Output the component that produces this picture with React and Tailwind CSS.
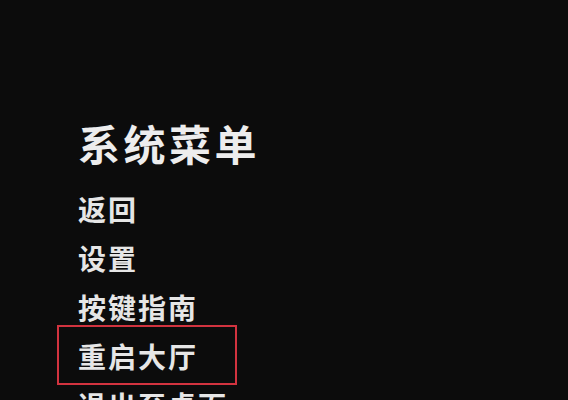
export default function App() {
  const items = ["返回", "设置", "按键指南", "重启大厅", "退出至桌面"];
  return (
    <div
      className="w-[568px] h-[400px] overflow-hidden bg-[#0c0c0c] text-[#e6e6e6] pl-[78px] pt-[122px]"
      style={{ fontFamily: '"Noto Sans CJK SC", "Noto Sans", sans-serif' }}
    >
      <div className="text-[42px] leading-[42px] font-bold tracking-[3.5px] text-[#ededed]">系统菜单</div>
      <div className="mt-[20px] flex flex-col">
        {items.map((t, i) => (
          <div key={t} className="relative h-[49px] flex items-center text-[28px] font-bold tracking-[2px] leading-none">
            {i === 3 && (
              <span className="absolute left-[-21px] top-[-6px] w-[180px] h-[60px] border-2 border-[#d2333f]" />
            )}
            <span>{t}</span>
          </div>
        ))}
      </div>
    </div>
  );
}
